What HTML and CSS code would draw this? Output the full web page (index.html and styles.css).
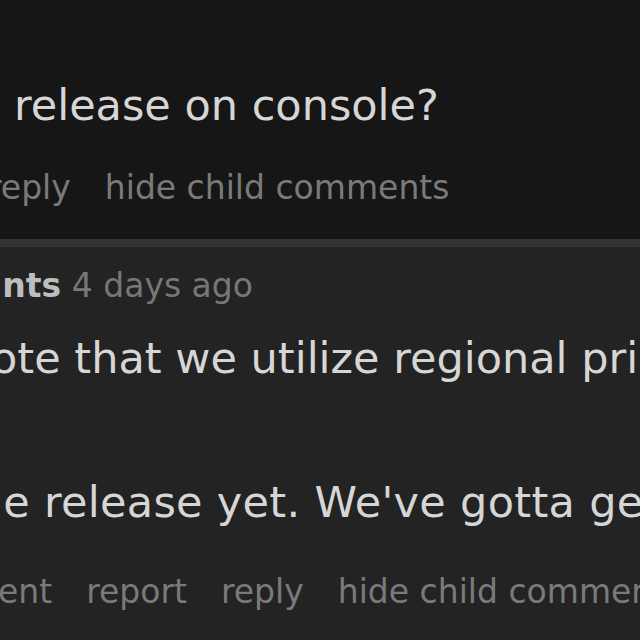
FILE: index.html
```html
<!DOCTYPE html>
<html lang="en">
<head>
    <meta charset="UTF-8">
    <meta name="viewport" content="width=device-width, initial-scale=1.0">
    <title>Comments</title>
    <link rel="stylesheet" href="styles.css">
</head>
<body>

    <div class="comment">
        <p class="text first">release on console?</p>
        <div class="actions first-actions">
            <a href="#">reply</a>
            <a href="#">hide child comments</a>
        </div>
    </div>

    <div class="comment child">
        <div class="inner">
            <div class="meta">
                <span class="author">ints</span>
                <span class="date">4 days ago</span>
            </div>
            <p class="text">ote that we utilize regional pricing</p>
            <p class="text second">le release yet. We've gotta get</p>
            <div class="actions">
                <a href="#">ent</a>
                <a href="#">report</a>
                <a href="#">reply</a>
                <a href="#">hide child comments</a>
            </div>
        </div>
    </div>

</body>
</html>
```

FILE: styles.css
```css
body {
    font-family: "DejaVu Sans", Verdana, sans-serif;
    background-color: #161616;
    margin: 0;
    height: 640px;
    overflow: hidden;
    white-space: nowrap;
}
.comment {
    padding: 75px 0 27px 0;
    background-color: #161616;
}
.text {
    margin: 0;
    font-size: 43px;
    line-height: 60px;
    color: #d6d6d6;
}
.text.first {
    padding-left: 14px;
}
.actions {
    display: flex;
    gap: 34px;
    margin-top: 29px;
    font-size: 33px;
    line-height: 48px;
}
.actions a {
    color: #7a7a7a;
    text-decoration: none;
}
.first-actions {
    margin-left: -12px;
}
.child {
    background-color: #232323;
    border-top: 8px solid #333;
    padding: 15px 0 0 0;
    height: 400px;
}
.inner {
    margin-left: -9px;
}
.meta {
    font-size: 33px;
    line-height: 48px;
    color: #777;
}
.author {
    font-weight: bold;
    color: #bdbdbd;
}
.child .text {
    margin-top: 18px;
}
.child .text.second {
    margin-top: 84px;
    letter-spacing: 0.3px;
}
.child .actions {
    margin-top: 36px;
    margin-left: 7px;
}
```
